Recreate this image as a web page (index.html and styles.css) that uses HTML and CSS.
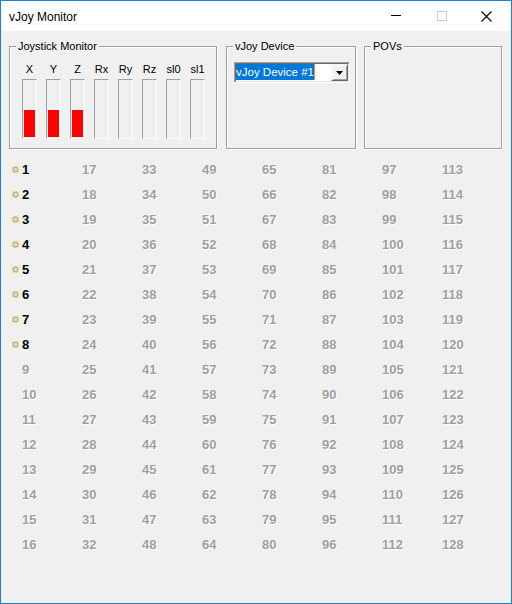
FILE: index.html
```html
<!DOCTYPE html>
<html>
<head>
<meta charset="utf-8">
<title>vJoy Monitor</title>
<link rel="stylesheet" href="styles.css">
</head>
<body>
<div class="window">
  <div class="titlebar">
    <span class="title">vJoy Monitor</span>
    <div class="caption-buttons">
      <div class="caption-btn"><svg width="10" height="10" viewBox="0 0 10 10"><path d="M0 4.5H10" stroke="#000" stroke-width="1"/></svg></div>
      <div class="caption-btn"><svg width="10" height="10" viewBox="0 0 10 10"><rect x="0.5" y="0.5" width="9" height="9" fill="none" stroke="#cccccc" stroke-width="1"/></svg></div>
      <div class="caption-btn close"><svg width="11" height="11" viewBox="0 0 11 11"><path d="M0.5 0.5L10.5 10.5M10.5 0.5L0.5 10.5" stroke="#000" stroke-width="1.1"/></svg></div>
    </div>
  </div>
  <div class="client">
    <div class="groups">
      <div class="group g-joy">
        <div class="legend">Joystick Monitor</div>
        <div class="axes">
          <div class="axis"><span class="axis-label">X</span><div class="bar"><div class="fill" style="height:27px"></div></div></div>
          <div class="axis"><span class="axis-label">Y</span><div class="bar"><div class="fill" style="height:27px"></div></div></div>
          <div class="axis"><span class="axis-label">Z</span><div class="bar"><div class="fill" style="height:27px"></div></div></div>
          <div class="axis"><span class="axis-label">Rx</span><div class="bar"></div></div>
          <div class="axis"><span class="axis-label">Ry</span><div class="bar"></div></div>
          <div class="axis"><span class="axis-label">Rz</span><div class="bar"></div></div>
          <div class="axis"><span class="axis-label">sl0</span><div class="bar"></div></div>
          <div class="axis"><span class="axis-label">sl1</span><div class="bar"></div></div>
        </div>
      </div>
      <div class="group g-dev">
        <div class="legend">vJoy Device</div>
        <div class="combo">
          <div class="combo-inner">
            <div class="combo-text"><span class="sel">vJoy Device #1</span><span class="caret"></span></div>
            <div class="drop"><svg width="7" height="4" viewBox="0 0 7 4"><path d="M0 0H7L3.5 4Z" fill="#000"/></svg></div>
          </div>
        </div>
      </div>
      <div class="group g-pov">
        <div class="legend">POVs</div>
      </div>
    </div>
    <div class="buttons">
      <div class="cell on"><svg class="led" width="9" height="9" viewBox="0 0 9 9"><rect width="9" height="9" fill="#f7f1b8"/><rect x="1.5" y="1.5" width="6" height="6" rx="2" fill="#b4b4b4"/><rect x="3" y="3" width="3" height="3" fill="#d9d9d9"/></svg>1</div>
      <div class="cell on"><svg class="led" width="9" height="9" viewBox="0 0 9 9"><rect width="9" height="9" fill="#f7f1b8"/><rect x="1.5" y="1.5" width="6" height="6" rx="2" fill="#b4b4b4"/><rect x="3" y="3" width="3" height="3" fill="#d9d9d9"/></svg>2</div>
      <div class="cell on"><svg class="led" width="9" height="9" viewBox="0 0 9 9"><rect width="9" height="9" fill="#f7f1b8"/><rect x="1.5" y="1.5" width="6" height="6" rx="2" fill="#b4b4b4"/><rect x="3" y="3" width="3" height="3" fill="#d9d9d9"/></svg>3</div>
      <div class="cell on"><svg class="led" width="9" height="9" viewBox="0 0 9 9"><rect width="9" height="9" fill="#f7f1b8"/><rect x="1.5" y="1.5" width="6" height="6" rx="2" fill="#b4b4b4"/><rect x="3" y="3" width="3" height="3" fill="#d9d9d9"/></svg>4</div>
      <div class="cell on"><svg class="led" width="9" height="9" viewBox="0 0 9 9"><rect width="9" height="9" fill="#f7f1b8"/><rect x="1.5" y="1.5" width="6" height="6" rx="2" fill="#b4b4b4"/><rect x="3" y="3" width="3" height="3" fill="#d9d9d9"/></svg>5</div>
      <div class="cell on"><svg class="led" width="9" height="9" viewBox="0 0 9 9"><rect width="9" height="9" fill="#f7f1b8"/><rect x="1.5" y="1.5" width="6" height="6" rx="2" fill="#b4b4b4"/><rect x="3" y="3" width="3" height="3" fill="#d9d9d9"/></svg>6</div>
      <div class="cell on"><svg class="led" width="9" height="9" viewBox="0 0 9 9"><rect width="9" height="9" fill="#f7f1b8"/><rect x="1.5" y="1.5" width="6" height="6" rx="2" fill="#b4b4b4"/><rect x="3" y="3" width="3" height="3" fill="#d9d9d9"/></svg>7</div>
      <div class="cell on"><svg class="led" width="9" height="9" viewBox="0 0 9 9"><rect width="9" height="9" fill="#f7f1b8"/><rect x="1.5" y="1.5" width="6" height="6" rx="2" fill="#b4b4b4"/><rect x="3" y="3" width="3" height="3" fill="#d9d9d9"/></svg>8</div>
      <div class="cell">9</div><div class="cell">10</div><div class="cell">11</div><div class="cell">12</div>
      <div class="cell">13</div><div class="cell">14</div><div class="cell">15</div><div class="cell">16</div>
      <div class="cell">17</div><div class="cell">18</div><div class="cell">19</div><div class="cell">20</div>
      <div class="cell">21</div><div class="cell">22</div><div class="cell">23</div><div class="cell">24</div>
      <div class="cell">25</div><div class="cell">26</div><div class="cell">27</div><div class="cell">28</div>
      <div class="cell">29</div><div class="cell">30</div><div class="cell">31</div><div class="cell">32</div>
      <div class="cell">33</div><div class="cell">34</div><div class="cell">35</div><div class="cell">36</div>
      <div class="cell">37</div><div class="cell">38</div><div class="cell">39</div><div class="cell">40</div>
      <div class="cell">41</div><div class="cell">42</div><div class="cell">43</div><div class="cell">44</div>
      <div class="cell">45</div><div class="cell">46</div><div class="cell">47</div><div class="cell">48</div>
      <div class="cell">49</div><div class="cell">50</div><div class="cell">51</div><div class="cell">52</div>
      <div class="cell">53</div><div class="cell">54</div><div class="cell">55</div><div class="cell">56</div>
      <div class="cell">57</div><div class="cell">58</div><div class="cell">59</div><div class="cell">60</div>
      <div class="cell">61</div><div class="cell">62</div><div class="cell">63</div><div class="cell">64</div>
      <div class="cell">65</div><div class="cell">66</div><div class="cell">67</div><div class="cell">68</div>
      <div class="cell">69</div><div class="cell">70</div><div class="cell">71</div><div class="cell">72</div>
      <div class="cell">73</div><div class="cell">74</div><div class="cell">75</div><div class="cell">76</div>
      <div class="cell">77</div><div class="cell">78</div><div class="cell">79</div><div class="cell">80</div>
      <div class="cell">81</div><div class="cell">82</div><div class="cell">83</div><div class="cell">84</div>
      <div class="cell">85</div><div class="cell">86</div><div class="cell">87</div><div class="cell">88</div>
      <div class="cell">89</div><div class="cell">90</div><div class="cell">91</div><div class="cell">92</div>
      <div class="cell">93</div><div class="cell">94</div><div class="cell">95</div><div class="cell">96</div>
      <div class="cell">97</div><div class="cell">98</div><div class="cell">99</div><div class="cell">100</div>
      <div class="cell">101</div><div class="cell">102</div><div class="cell">103</div><div class="cell">104</div>
      <div class="cell">105</div><div class="cell">106</div><div class="cell">107</div><div class="cell">108</div>
      <div class="cell">109</div><div class="cell">110</div><div class="cell">111</div><div class="cell">112</div>
      <div class="cell">113</div><div class="cell">114</div><div class="cell">115</div><div class="cell">116</div>
      <div class="cell">117</div><div class="cell">118</div><div class="cell">119</div><div class="cell">120</div>
      <div class="cell">121</div><div class="cell">122</div><div class="cell">123</div><div class="cell">124</div>
      <div class="cell">125</div><div class="cell">126</div><div class="cell">127</div><div class="cell">128</div>
    </div>
  </div>
</div>
</body>
</html>
```
FILE: styles.css
```css
html, body {
  margin: 0;
  padding: 0;
  background: #ffffff;
}

.window {
  width: 512px;
  height: 604px;
  box-sizing: border-box;
  border: 1px solid #1883d7;
  display: flex;
  flex-direction: column;
  font-family: "Liberation Sans", Arial, sans-serif;
  color: #000;
}

.titlebar {
  height: 30px;
  flex: none;
  background: #ffffff;
  display: flex;
  align-items: center;
}

.title {
  font-size: 12px;
  line-height: 30px;
  padding-left: 8px;
  padding-top: 1px;
}

.caption-buttons {
  margin-left: auto;
  display: flex;
}

.caption-btn {
  width: 46px;
  height: 30px;
  display: flex;
  align-items: center;
  justify-content: center;
}

.caption-btn svg {
  display: block;
}

.caption-btn.close {
  padding-right: 3px;
  box-sizing: border-box;
}

.client {
  flex: 1;
  background: #f0f0f0;
  padding: 15px 0 0 8px;
}

.groups {
  display: flex;
  align-items: flex-start;
}

.group {
  box-sizing: border-box;
  height: 103px;
  border: 1px solid #a0a0a0;
  box-shadow: inset 1px 1px 0 #ffffff, 1px 1px 0 #ffffff;
  display: flex;
  flex-direction: column;
}

.g-joy { width: 208px; }
.g-dev { width: 130px; margin-left: 9px; }
.g-pov { width: 138px; margin-left: 8px; }

.legend {
  width: fit-content;
  margin: -7px 0 -6px 6px;
  padding: 0 2px;
  background: #f0f0f0;
  font-size: 11px;
  line-height: 13px;
  white-space: nowrap;
}

.axes {
  display: flex;
  gap: 9px;
  margin: 16px 0 0 12px;
}

.axis {
  width: 15px;
  display: flex;
  flex-direction: column;
  align-items: center;
}

.axis-label {
  font-size: 11px;
  line-height: 13px;
  margin-bottom: 3px;
  white-space: nowrap;
}

.bar {
  width: 15px;
  height: 60px;
  box-sizing: border-box;
  border: 1px solid;
  border-color: #a0a0a0 #ffffff #ffffff #a0a0a0;
  padding: 1px;
  display: flex;
  align-items: flex-end;
}

.fill {
  width: 100%;
  background: #ff0000;
}

.combo {
  margin: 15px 0 0 7px;
  width: 116px;
  height: 21px;
  box-sizing: border-box;
  border: 1px solid;
  border-color: #a0a0a0 #ffffff #ffffff #a0a0a0;
}

.combo-inner {
  height: 100%;
  box-sizing: border-box;
  border: 1px solid;
  border-color: #696969 #e3e3e3 #e3e3e3 #696969;
  background: #ffffff;
  display: flex;
}

.combo-text {
  flex: 1;
  display: flex;
  align-items: flex-start;
}

.sel {
  background: #0078d7;
  color: #ffffff;
  font-size: 11.5px;
  line-height: 16px;
  height: 16px;
  white-space: nowrap;
}

.caret {
  width: 1px;
  height: 16px;
  background: #ff8728;
}

.drop {
  width: 17px;
  height: 17px;
  box-sizing: border-box;
  border: 1px solid;
  border-color: #f0f0f0 #696969 #696969 #f0f0f0;
  box-shadow: inset 1px 1px 0 #ffffff, inset -1px -1px 0 #a0a0a0;
  background: #f0f0f0;
  display: flex;
  align-items: center;
  justify-content: center;
}

.drop svg {
  display: block;
}

.buttons {
  display: grid;
  grid-template-columns: repeat(8, 60px);
  grid-template-rows: repeat(16, 25px);
  grid-auto-flow: column;
  margin: 8px 0 0 2px;
}

.cell {
  display: flex;
  align-items: center;
  padding-left: 11px;
  font-weight: bold;
  font-size: 13px;
  line-height: 25px;
  color: #a0a0a0;
  text-shadow: 1px 1px 0 #ffffff;
}

.cell.on {
  padding-left: 0;
  color: #000000;
  text-shadow: none;
}

.led {
  display: block;
  margin-right: 2px;
}
```
